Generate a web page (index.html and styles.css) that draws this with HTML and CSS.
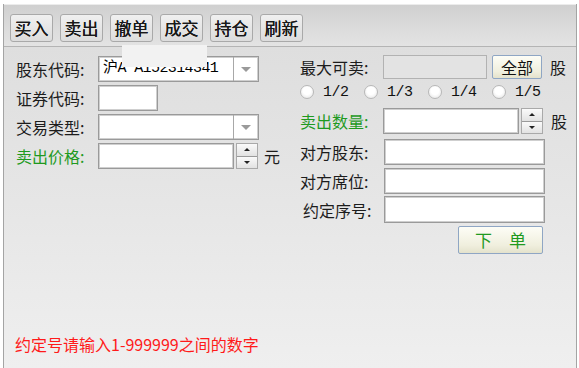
FILE: index.html
```html
<!DOCTYPE html>
<html>
<head>
<meta charset="utf-8">
<link rel="stylesheet" href="styles.css">
</head>
<body>
<div class="window">
  <div class="toolbar">
    <button class="tb">买入</button>
    <button class="tb">卖出</button>
    <button class="tb">撤单</button>
    <button class="tb">成交</button>
    <button class="tb">持仓</button>
    <button class="tb">刷新</button>
  </div>
  <div class="panel">
    <div class="tabcover"></div>
    <div class="col left">
      <div class="row">
        <span class="lbl">股东代码:</span>
        <div class="combo w161"><span class="ctext">沪A A152314341</span><span class="cbtn"><i class="tri"></i></span></div>
      </div>
      <div class="row">
        <span class="lbl">证券代码:</span>
        <div class="field w60"></div>
      </div>
      <div class="row">
        <span class="lbl">交易类型:</span>
        <div class="combo w161"><span class="ctext"></span><span class="cbtn"><i class="tri"></i></span></div>
      </div>
      <div class="row">
        <span class="lbl green">卖出价格:</span>
        <div class="field w136"></div>
        <div class="spin"><span class="sup"><i class="up"></i></span><span class="sdn"><i class="dn"></i></span></div>
        <span class="unit">元</span>
      </div>
    </div>
    <div class="col right">
      <div class="row r1">
        <span class="lbl rl">最大可卖:</span>
        <div class="field ro w104"></div>
        <button class="btn all">全部</button>
        <span class="unit u2">股</span>
      </div>
      <div class="radios">
        <span class="ropt"><i class="radio"></i>1/2</span>
        <span class="ropt"><i class="radio"></i>1/3</span>
        <span class="ropt"><i class="radio"></i>1/4</span>
        <span class="ropt"><i class="radio"></i>1/5</span>
      </div>
      <div class="row r3">
        <span class="lbl rl green">卖出数量:</span>
        <div class="field w136"></div>
        <div class="spin"><span class="sup"><i class="up"></i></span><span class="sdn"><i class="dn"></i></span></div>
        <span class="unit u3">股</span>
      </div>
      <div class="row r4">
        <span class="lbl rl2">对方股东:</span>
        <div class="field w161"></div>
      </div>
      <div class="row r5">
        <span class="lbl rl2">对方席位:</span>
        <div class="field w161"></div>
      </div>
      <div class="row r6">
        <span class="lbl rl2 ind">约定序号:</span>
        <div class="field w161 h27"></div>
      </div>
      <button class="btn order">下　单</button>
    </div>
    <div class="msg">约定号请输入1-999999之间的数字</div>
  </div>
</div>
</body>
</html>
```

FILE: styles.css
```css
* { box-sizing: border-box; }
html, body {
  margin: 0;
  padding: 0;
  width: 579px;
  height: 368px;
  overflow: hidden;
  background: #ffffff;
  font-family: "Noto Sans CJK SC", "Noto Sans", sans-serif;
}
.window {
  margin: 4px 2px 0 3px;
  height: 364px;
  border-left: 1px solid #a4a4a4;
  border-right: 1px solid #a4a4a4;
  display: flex;
  flex-direction: column;
  background: #e6e6e6;
}
.toolbar {
  height: 42px;
  padding: 9px 0 0 6px;
  display: flex;
  gap: 7px;
  background: linear-gradient(#d0d0d0, #dcdcdc 60%, #e3e3e3);
  border-top: 1px solid #ececec;
}
.tb {
  width: 43px;
  height: 28px;
  padding: 0;
  border: 1px solid #a9a9a9;
  border-radius: 3px;
  background: linear-gradient(#f0f0f0, #dcdcdc);
  font-family: "Noto Sans CJK SC", sans-serif;
  font-size: 17px;
  font-weight: normal;
  color: #1a1a1a;
  line-height: 24px;
  text-shadow: 0 0 0.4px #000;
}
.panel {
  position: relative;
  flex: 1;
  border-top: 1px solid #b4b4b4;
  background: linear-gradient(#dedede, #e8e8e8 60%, #efefef);
  display: flex;
}
.tabcover {
  position: absolute;
  left: 118px;
  top: -2px;
  width: 85px;
  height: 22px;
  background: #f2f2f2;
  z-index: 3;
}
.col { display: flex; flex-direction: column; }
.left { margin: 9px 0 0 12px; width: 284px; }
.right { margin-top: 8px; }
.row { display: flex; align-items: center; height: 26px; margin-bottom: 3px; }
.lbl {
  font-size: 16px;
  color: #1c1c1c;
  width: 82px;
  white-space: nowrap;
  line-height: 20px;
}
.rl { width: 83px; }
.rl2 { width: 84px; }
.ind { padding-left: 3px; }
.green { color: #1f9a1f; }
.field {
  height: 26px;
  background: #ffffff;
  border: 1px solid #9a9a9a;
  box-shadow: inset 0 0 0 1px #cfcfcf;
}
.field.ro { background: #e3e3e3; border-color: #b2b2b2; box-shadow: none; height: 24px; }
.w60 { width: 60px; }
.w104 { width: 104px; }
.w136 { width: 136px; }
.w161 { width: 161px; }
.h27 { height: 27px; }
.combo {
  height: 26px;
  display: flex;
  background: #ffffff;
  border: 1px solid #9a9a9a;
  box-shadow: inset 0 0 0 1px #cfcfcf;
}
.ctext {
  flex: 1;
  padding-left: 4px;
  font-family: "Liberation Mono", "Noto Sans CJK SC", monospace;
  font-size: 15px;
  line-height: 24px;
  color: #000;
  letter-spacing: -0.6px;
}
.cbtn {
  width: 25px;
  border-left: 1px solid #a8a8a8;
  display: flex;
  align-items: center;
  justify-content: center;
}
.tri {
  width: 0; height: 0;
  border-left: 5px solid transparent;
  border-right: 5px solid transparent;
  border-top: 5px solid #9a9a9a;
}
.spin {
  width: 22px;
  height: 26px;
  margin-left: 2px;
  display: flex;
  flex-direction: column;
  border: 1px solid #a9a9a9;
  background: #f4f4f4;
}
.sup, .sdn {
  flex: 1;
  display: flex;
  align-items: center;
  justify-content: center;
  background: linear-gradient(#fafafa, #e2e2e2);
}
.sup { border-bottom: 1px solid #9a9a9a; }
.up {
  width: 0; height: 0;
  border-left: 3px solid transparent;
  border-right: 3px solid transparent;
  border-bottom: 3px solid #222;
}
.dn {
  width: 0; height: 0;
  border-left: 3px solid transparent;
  border-right: 3px solid transparent;
  border-top: 3px solid #222;
}
.unit { font-size: 16px; color: #1c1c1c; margin-left: 6px; }
.u2 { margin-left: 8px; }
.u3 { margin-left: 8px; }
.btn {
  padding: 0;
  border: 1px solid #8fa6c4;
  border-radius: 2px;
  background: linear-gradient(#fdfdf6, #f0efde 70%, #e4e2cc);
  font-family: "Noto Sans CJK SC", sans-serif;
  font-size: 16px;
  line-height: 20px;
  color: #111;
}
.all { width: 50px; height: 24px; margin-left: 5px; }
.order {
  width: 85px;
  height: 28px;
  margin-left: 158px;
  margin-top: 0;
  color: #1f9a1f;
  font-size: 17px;
}
.r1 { height: 24px; margin-bottom: 0; }
.radios {
  display: flex;
  height: 16px;
  margin-top: 5px;
  margin-bottom: 8px;
  align-items: center;
}
.ropt {
  display: flex;
  align-items: center;
  width: 64px;
  font-family: "Liberation Mono", "DejaVu Sans Mono", monospace;
  font-size: 15px;
  letter-spacing: -0.5px;
  color: #111;
}
.radio {
  width: 14px;
  height: 14px;
  border-radius: 50%;
  border: 1px solid #b8b8b8;
  background: radial-gradient(circle at 50% 40%, #ffffff 40%, #e0e0e0);
  margin-right: 9px;
}
.r3 { margin-bottom: 5px; }
.r5 { margin-bottom: 2px; }
.r6 { height: 27px; margin-bottom: 3px; }
.msg {
  position: absolute;
  left: 11px;
  top: 287px;
  font-size: 16px;
  color: #ff1a1a;
  line-height: 20px;
}
```
